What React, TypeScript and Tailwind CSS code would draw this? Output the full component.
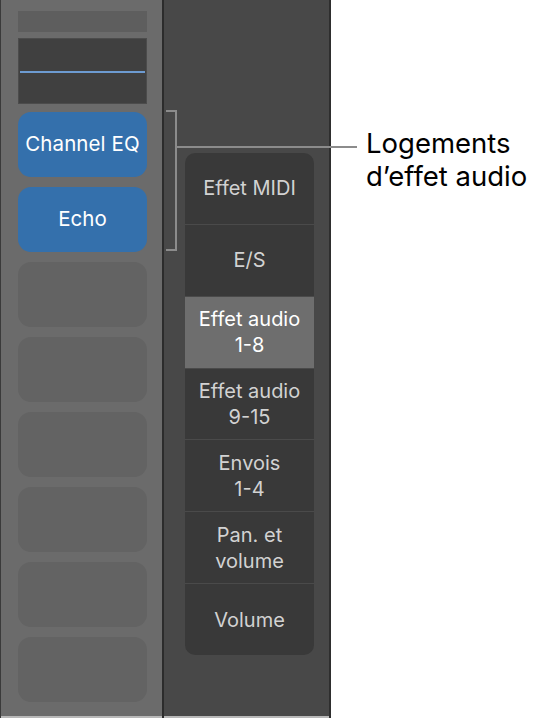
import React from "react";

const menu = [
  { t: ["Effet MIDI"], active: false },
  { t: ["E/S"], active: false },
  { t: ["Effet audio", "1-8"], active: true },
  { t: ["Effet audio", "9-15"], active: false },
  { t: ["Envois", "1-4"], active: false },
  { t: ["Pan. et", "volume"], active: false },
  { t: ["Volume"], active: false },
];

export default function App() {
  return (
    <div
      className="relative w-[556px] h-[718px] bg-white overflow-hidden"
      style={{ fontFamily: "Inter, 'Noto Sans', sans-serif" }}
    >
      <div className="flex h-[718px]">
        {/* Left channel column */}
        <div className="w-[1px] bg-[#3a3a3a]" />
        <div className="w-[161px] bg-[#6b6b6b] flex flex-col items-start pl-[17px] pt-[11px] border-b-2 border-[#b8b8b8]">
          <div className="w-[129px] h-[21px] bg-[#5e5e5e]" />
          <div className="mt-[6px] w-[129px] h-[66px] bg-[#404040] border border-[#4c4c4c] flex items-center">
            <div className="w-full h-[2px] mx-[1px] bg-[#6d9bd1] mt-[1px]" />
          </div>
          <div className="mt-[8px] flex flex-col gap-[10px]">
            <div className="w-[129px] h-[65px] rounded-[13px] bg-[#3470ac] flex items-center justify-center text-white text-[20.5px] tracking-[0.1px]">
              Channel EQ
            </div>
            <div className="w-[129px] h-[65px] rounded-[13px] bg-[#3470ac] flex items-center justify-center text-white text-[20.5px]">
              Echo
            </div>
            {[0, 1, 2, 3, 4, 5].map((i) => (
              <div key={i} className="w-[129px] h-[65px] rounded-[13px] bg-[#636363]" />
            ))}
          </div>
        </div>
        <div className="w-[2px] bg-[#2c2c2c]" />
        {/* Right column */}
        <div className="w-[165px] bg-[#484848] pl-[21px] pt-[153px] border-b-2 border-[#b8b8b8]">
          <div className="w-[129px] h-[502px] rounded-[10px] bg-[#393939] overflow-hidden flex flex-col">
            {menu.map((m, i) => (
              <div
                key={i}
                className={`flex-1 flex flex-col items-center justify-center leading-[26px] text-[20px] ${
                  i > 0 ? "border-t border-[#4a4a4a]" : ""
                } ${m.active ? "bg-[#6e6e6e] text-white" : "text-[#d2d2d2]"}`}
              >
                {m.t.map((l, j) => (
                  <span key={j}>{l}</span>
                ))}
              </div>
            ))}
          </div>
        </div>
        <div className="w-[2px] bg-[#2e2e2e]" />
      </div>

      {/* Bracket callout */}
      <div className="absolute left-[166px] top-[110px] w-[11px] h-[141px] border-t-2 border-r-2 border-b-2 border-[#8c8c8c]" />
      <div className="absolute left-[177px] top-[146px] w-[180px] h-[2px] bg-[#8c8c8c]" />
      <div className="absolute left-[366px] top-[127px] text-black text-[27.5px] leading-[33px]">
        <div>Logements</div>
        <div>d’effet audio</div>
      </div>
    </div>
  );
}
